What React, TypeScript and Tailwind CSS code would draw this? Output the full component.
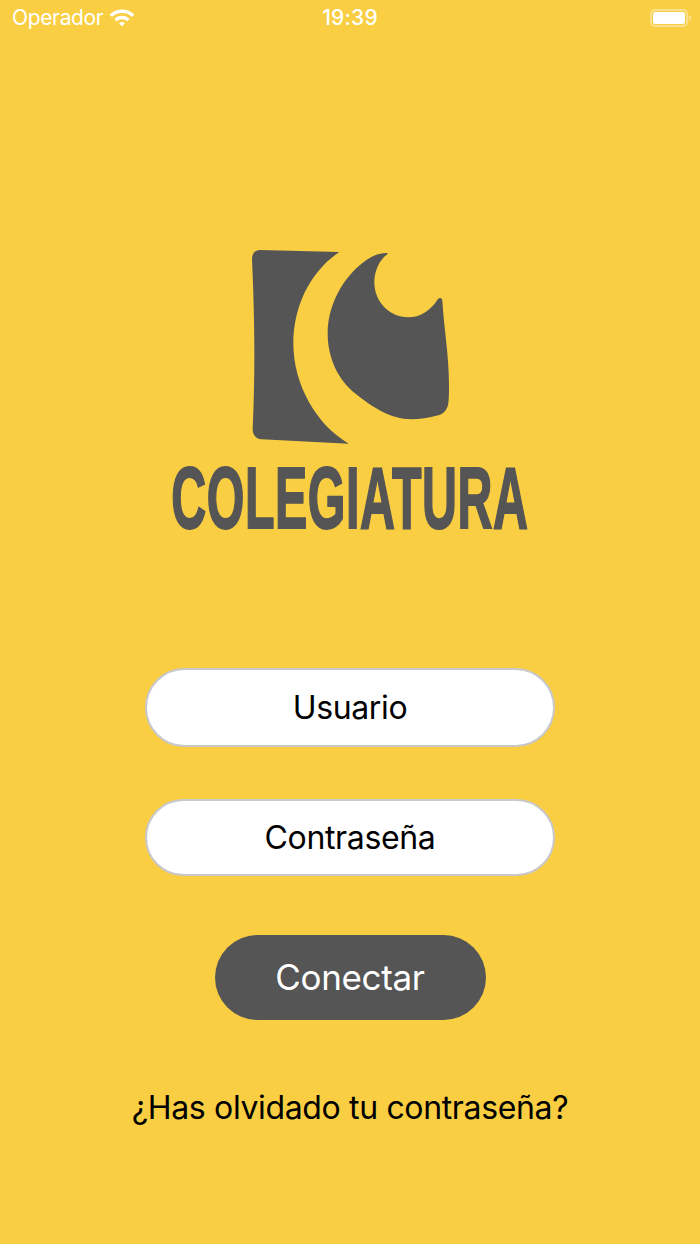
const LogoMark = () => (
    <svg width="240" height="220" viewBox="0 0 720 660" className="block">
        <path
            fill="#555555"
            d="M90 45 L328 51 C240 110 190 215 190 325 C190 450 260 570 356 626 L95 613 C78 612 68 600 68 582 C76 400 74 250 66 72 C66 55 76 45 90 45 Z"
        />
        <path
            fill="#555555"
            d="M472 58 C448 75 433 108 433 142 C433 200 478 247 535 247 C570 247 600 228 622 195 C628 187 636 187 637 197 C642 280 657 360 657 450 C657 475 657 490 655 505 C652 525 640 537 625 541 C595 549 570 553 545 553 C480 553 425 515 375 475 C325 435 293 370 293 295 C293 200 350 110 420 68 C440 57 455 54 468 54 C473 54 475 56 472 58 Z"
        />
    </svg>
);

const WifiIcon = () => (
    <svg width="26" height="19" viewBox="0 0 26 19" className="block">
        <path fill="white" d="M13 0.5 C17.8 0.5 22.2 2.4 25.4 5.5 L23 8.1 C20.4 5.6 16.9 4.1 13 4.1 C9.1 4.1 5.6 5.6 3 8.1 L0.6 5.5 C3.8 2.4 8.2 0.5 13 0.5 Z" />
        <path fill="white" d="M13 6.8 C15.9 6.8 18.6 8 20.6 9.9 L18.2 12.4 C16.8 11.1 15 10.3 13 10.3 C11 10.3 9.2 11.1 7.8 12.4 L5.4 9.9 C7.4 8 10.1 6.8 13 6.8 Z" />
        <path fill="white" d="M13 13 C14.2 13 15.2 13.5 16 14.2 L13 17.6 L10 14.2 C10.8 13.5 11.8 13 13 13 Z" />
    </svg>
);

const Battery = () => (
    <div className="flex items-center gap-[1px]">
        <div className="w-[38px] h-[18px] rounded-[5px] border-2 border-white/40 p-[1px]">
            <div className="w-full h-full rounded-[2px] bg-white" />
        </div>
        <div className="w-[2px] h-[6px] rounded-r-full bg-white/40" />
    </div>
);

const Field = ({ label }: { label: string }) => (
    <div className="w-[410px] flex items-center justify-center rounded-full bg-white border-2 border-[#c8c8cc] text-[32px] tracking-[-0.35px] text-black h-full">
        {label}
    </div>
);

export default function App() {
    return (
        <div className="w-[700px] h-[1244px] bg-[#f9ce42] flex flex-col items-center font-['Inter',sans-serif] overflow-hidden">
            <div className="relative w-full h-[36px] flex items-center justify-between pl-3 pr-[9px] text-white text-[21px]">
                <div className="flex items-center gap-[6px] tracking-[-0.35px]">
                    <span>Operador</span>
                    <WifiIcon />
                </div>
                <span className="absolute left-0 right-0 text-center font-medium tracking-[0.2px]">19:39</span>
                <Battery />
            </div>

            <div className="mt-[199px] ml-[-1px]">
                <LogoMark />
            </div>

            <div className="h-[85px] w-[380px] flex items-center justify-center">
                <span className="scale-x-[0.55] font-['Liberation_Sans',sans-serif] font-bold text-[#555555] text-[88px] leading-none tracking-[1px] [-webkit-text-stroke:2px_#555555] whitespace-nowrap">
                    COLEGIATURA
                </span>
            </div>

            <div className="mt-[128px] h-[79px]">
                <Field label="Usuario" />
            </div>
            <div className="mt-[52px] h-[77px]">
                <Field label="Contraseña" />
            </div>

            <button className="mt-[59px] w-[271px] h-[85px] rounded-full bg-[#555555] text-white text-[35px] tracking-[-0.35px]">
                Conectar
            </button>

            <p className="mt-[68px] text-[32px] leading-[40px] tracking-[-0.35px] text-black whitespace-nowrap">¿Has olvidado tu contraseña?</p>
        </div>
    );
}
